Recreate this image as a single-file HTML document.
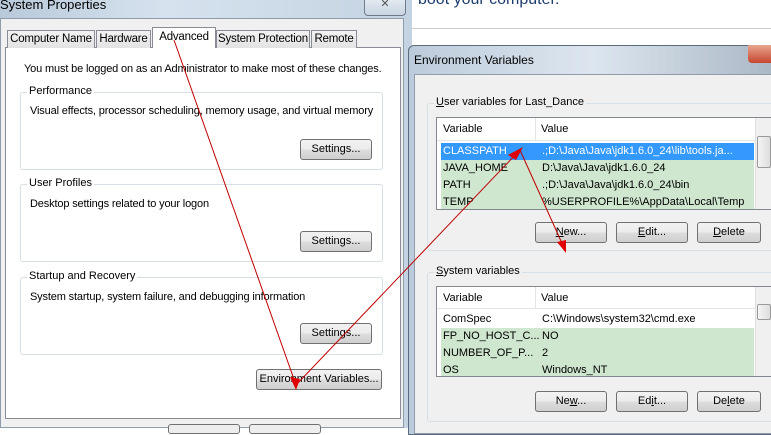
<!DOCTYPE html>
<html><head><style>
*{margin:0;padding:0;box-sizing:border-box}
body{width:771px;height:428px;overflow:hidden;position:relative;background:#fff;font-family:"Liberation Sans",sans-serif;font-size:11px;color:#000}
.a{position:absolute}
.p{position:absolute;font-size:11px;letter-spacing:-0.15px}
.btn{position:absolute;border:1px solid #707070;border-radius:3px;background:linear-gradient(#f2f2f2,#ebebeb 50%,#dddddd 51%,#cfcfcf);text-align:center;font-size:11px;line-height:19px}
.grp{position:absolute;border:1px solid #d5dfe5;border-radius:3px}
.gl{position:absolute;background:#fff;padding:0 2px;top:-8px;left:6px}
.gl2{position:absolute;background:#f0f0f0;padding:0 2px;top:-8px;left:6px}
.tab{position:absolute;top:30px;height:18px;border:1px solid #898c95;border-bottom:none;background:linear-gradient(#f2f2f2,#e3e3e3);font-size:11.5px;line-height:17px;text-align:center;letter-spacing:-0.2px}
.lv{position:absolute;background:#fff;border:1px solid #828790}
.row{position:absolute;left:4px;height:17px;line-height:17px;background:#cfe6cf;width:313px}
.row span{position:absolute;left:2px}
.row span+span{left:101px}
</style></head><body>
<div class="a" style="left:0;top:0;width:412px;height:428px;background:linear-gradient(90deg,#b9c9da,#d6e2ee 40%,#c4d3e2)"></div>
<div class="a" style="left:0;top:-3px;font-size:13px;color:#000">System Properties</div>
<div class="a" style="left:364px;top:-4px;width:42px;height:20px;border:1px solid #6d7b8c;border-radius:0 0 4px 4px;background:linear-gradient(#e7edf4,#c9d5e2);text-align:center;font-size:11px;color:#555">✕</div>
<div class="a" style="left:0;top:18px;width:404px;height:410px;background:#f0f0f0;border:1px solid #8e9cac"></div>
<div class="a" style="left:5px;top:47px;width:396px;height:372px;background:#fff;border:1px solid #898c95"></div>
<div class="tab" style="left:7px;width:88px">Computer Name</div>
<div class="tab" style="left:96px;width:55px">Hardware</div>
<div class="tab" style="left:216px;width:94px">System Protection</div>
<div class="tab" style="left:311px;width:46px">Remote</div>
<div class="tab" style="left:152px;top:27px;height:21px;width:64px;background:#fff;line-height:18px">Advanced</div>
<div class="p" style="left:24px;top:63px">You must be logged on as an Administrator to make most of these changes.</div>
<div class="grp" style="left:20px;top:92px;width:363px;height:78px"><div class="gl">Performance</div></div>
<div class="p" style="left:30px;top:105px">Visual effects, processor scheduling, memory usage, and virtual memory</div>
<div class="btn" style="left:300px;top:139px;width:72px;height:21px">Settings...</div>
<div class="grp" style="left:20px;top:184px;width:363px;height:78px"><div class="gl">User Profiles</div></div>
<div class="p" style="left:30px;top:198px">Desktop settings related to your logon</div>
<div class="btn" style="left:300px;top:231px;width:72px;height:21px">Settings...</div>
<div class="grp" style="left:20px;top:277px;width:363px;height:78px"><div class="gl">Startup and Recovery</div></div>
<div class="p" style="left:30px;top:291px">System startup, system failure, and debugging information</div>
<div class="btn" style="left:300px;top:323px;width:72px;height:21px">Settings...</div>
<div class="btn" style="left:256px;top:369px;width:126px;height:21px">Environment Variables...</div>
<div class="a" style="left:168px;top:424px;width:72px;height:10px;border:1px solid #707070;border-radius:3px;background:#eee"></div>
<div class="a" style="left:249px;top:424px;width:72px;height:10px;border:1px solid #707070;border-radius:3px;background:#eee"></div>
<div class="a" style="left:412px;top:0;width:359px;height:50px;background:#fff"></div>
<div class="a" style="left:412px;top:28px;width:359px;height:1px;background:#ccc"></div>
<div class="a" style="left:418px;top:-9px;font-size:16px;color:#1e3c6e">boot your computer.</div>
<div class="a" style="left:408px;top:45px;width:370px;height:390px;border:1px solid #5c6b7c;border-radius:6px 0 0 0;background:linear-gradient(90deg,#bccbdb,#dde6ef 50%,#a9b6c4)"></div>
<div class="a" style="left:414px;top:53px;font-size:12px">Environment Variables</div>
<div class="a" style="left:748px;top:45px;width:30px;height:18px;background:linear-gradient(#e8a590,#c7462f);border-radius:0 0 0 4px"></div>
<div class="a" style="left:414px;top:74px;width:360px;height:360px;background:#f0f0f0;border:1px solid #8e9cac"></div>
<div class="grp" style="left:427px;top:103px;width:350px;height:148px"><div class="gl2"><u>U</u>ser variables for Last_Dance</div></div>
<div class="lv" style="left:436px;top:117px;width:340px;height:93px">
 <div class="a" style="left:0;top:0;width:318px;height:23px;border-bottom:1px solid #e5e5e5;line-height:23px"><span class="a" style="left:6px">Variable</span><span class="a" style="left:104px">Value</span><div class="a" style="left:98px;top:0;width:1px;height:23px;background:#e5e5e5"></div></div>
 <div class="a" style="left:318px;top:0;width:20px;height:91px;background:#f0f0f0;border-left:1px solid #e0e0e0"></div>
 <div class="a" style="left:320px;top:18px;width:14px;height:32px;border:1px solid #999;border-radius:2px;background:linear-gradient(90deg,#f4f4f4,#ddd)"></div>
 <div class="row" style="top:25px;background:#3399ff;color:#fff"><span>CLASSPATH</span><span>.;D:\Java\Java\jdk1.6.0_24\lib\tools.ja...</span></div>
 <div class="row" style="top:42px"><span>JAVA_HOME</span><span>D:\Java\Java\jdk1.6.0_24</span></div>
 <div class="row" style="top:59px"><span>PATH</span><span>.;D:\Java\Java\jdk1.6.0_24\bin</span></div>
 <div class="row" style="top:76px;height:15px"><span>TEMP</span><span>%USERPROFILE%\AppData\Local\Temp</span></div>
</div>
<div class="btn" style="left:535px;top:222px;width:72px;height:21px"><u>N</u>ew...</div>
<div class="btn" style="left:616px;top:222px;width:72px;height:21px"><u>E</u>dit...</div>
<div class="btn" style="left:697px;top:222px;width:64px;height:21px"><u>D</u>elete</div>
<div class="grp" style="left:427px;top:272px;width:350px;height:150px"><div class="gl2"><u>S</u>ystem variables</div></div>
<div class="lv" style="left:436px;top:286px;width:340px;height:91px">
 <div class="a" style="left:0;top:0;width:318px;height:22px;border-bottom:1px solid #e5e5e5;line-height:22px"><span class="a" style="left:6px">Variable</span><span class="a" style="left:104px">Value</span><div class="a" style="left:98px;top:0;width:1px;height:22px;background:#e5e5e5"></div></div>
 <div class="a" style="left:318px;top:0;width:20px;height:89px;background:#f0f0f0;border-left:1px solid #e0e0e0"></div>
 <div class="a" style="left:320px;top:17px;width:14px;height:16px;border:1px solid #999;border-radius:2px;background:linear-gradient(90deg,#f4f4f4,#ddd)"></div>
 <div class="row" style="top:24px;background:#fff"><span>ComSpec</span><span>C:\Windows\system32\cmd.exe</span></div>
 <div class="row" style="top:41px"><span>FP_NO_HOST_C...</span><span>NO</span></div>
 <div class="row" style="top:58px"><span>NUMBER_OF_P...</span><span>2</span></div>
 <div class="row" style="top:75px;height:14px"><span>OS</span><span>Windows_NT</span></div>
</div>
<div class="btn" style="left:535px;top:391px;width:72px;height:21px">Ne<u>w</u>...</div>
<div class="btn" style="left:616px;top:391px;width:72px;height:21px">Ed<u>i</u>t...</div>
<div class="btn" style="left:697px;top:391px;width:64px;height:21px">De<u>l</u>ete</div>
<svg class="a" style="left:0;top:0" width="771" height="428">
<g stroke="#c00000" stroke-width="1" fill="none">
<line x1="174" y1="40" x2="296" y2="385"/>
<line x1="518" y1="152" x2="296" y2="385"/>
<line x1="520" y1="150" x2="565" y2="250"/>
</g>
<g fill="#e00000">
<polygon points="296,390 290,377 300,379"/>
<polygon points="523,147 516,160 508,155"/>
<polygon points="566,253 557,242 566,240"/>
</g>
</svg>
</body></html>
